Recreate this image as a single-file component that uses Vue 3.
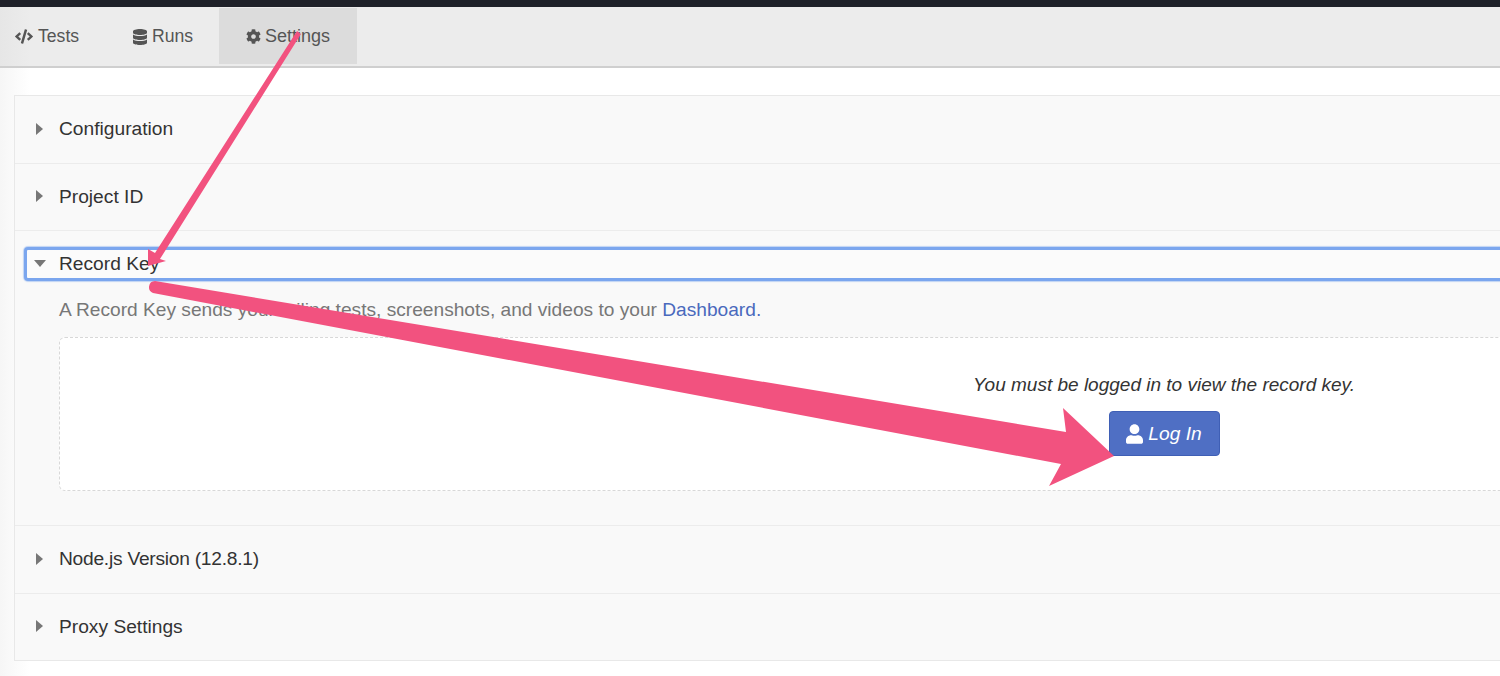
<script setup>
const user = "M224 256c70.7 0 128-57.3 128-128S294.7 0 224 0 96 57.3 96 128s57.3 128 128 128zm89.6 32h-16.7c-22.2 10.2-46.9 16-72.9 16s-50.6-5.8-72.9-16h-16.7C60.2 288 0 348.2 0 422.4V464c0 26.5 21.5 48 48 48h352c26.5 0 48-21.5 48-48v-41.6c0-74.2-60.2-134.4-134.4-134.4z";
const db = "M448 73.143v45.714C448 159.143 347.667 192 224 192S0 159.143 0 118.857V73.143C0 32.857 100.333 0 224 0s224 32.857 224 73.143zM448 176v102.857C448 319.143 347.667 352 224 352S0 319.143 0 278.857V176c48.125 33.143 136.208 48.572 224 48.572S399.874 209.143 448 176zm0 160v102.857C448 479.143 347.667 512 224 512S0 479.143 0 438.857V336c48.125 33.143 136.208 48.572 224 48.572S399.874 369.143 448 336z";
const code = "M278.9 511.5l-61-17.7c-6.4-1.8-10-8.5-8.2-14.9L346.2 8.7c1.8-6.4 8.5-10 14.9-8.2l61 17.7c6.4 1.8 10 8.5 8.2 14.9L293.8 503.3c-1.9 6.4-8.5 10.1-14.9 8.2zm-114-112.2l43.5-46.4c4.6-4.9 4.3-12.7-.8-17.2L117 256l90.6-79.7c5.1-4.5 5.5-12.3.8-17.2l-43.5-46.4c-4.5-4.8-12.1-5.1-17-.5L3.8 247.2c-5.1 4.7-5.1 12.8 0 17.5l144.1 135.1c4.9 4.6 12.5 4.4 17-.5zm327.2.6l144.1-135.1c5.1-4.7 5.1-12.8 0-17.5L492.1 112.1c-4.8-4.5-12.4-4.3-17 .5L431.6 159c-4.6 4.9-4.3 12.7.8 17.2L523 256l-90.6 79.7c-5.1 4.5-5.5 12.3-.8 17.2l43.5 46.4c4.5 4.9 12.1 5.1 17 .6z";
const cog = "M487.4 315.7l-42.6-24.6c4.3-23.2 4.3-47 0-70.2l42.6-24.6c4.9-2.8 7.1-8.6 5.5-14-11.1-35.6-30-67.8-54.7-94.6-3.8-4.1-10-5.1-14.8-2.3L380.8 110c-17.9-15.4-38.5-27.3-60.8-35.1V25.8c0-5.6-3.9-10.5-9.4-11.7-36.7-8.2-74.3-7.8-109.2 0-5.5 1.2-9.4 6.1-9.4 11.7V75c-22.2 7.9-42.8 19.8-60.8 35.1L88.7 85.5c-4.9-2.8-11-1.9-14.8 2.3-24.7 26.7-43.6 58.9-54.7 94.6-1.7 5.4.6 11.2 5.5 14L67.3 221c-4.3 23.2-4.3 47 0 70.2l-42.6 24.6c-4.9 2.8-7.1 8.6-5.5 14 11.1 35.6 30 67.8 54.7 94.6 3.8 4.1 10 5.1 14.8 2.3l42.6-24.6c17.9 15.4 38.5 27.3 60.8 35.1v49.2c0 5.6 3.9 10.5 9.4 11.7 36.7 8.2 74.3 7.8 109.2 0 5.5-1.2 9.4-6.1 9.4-11.7v-49.2c22.2-7.9 42.8-19.8 60.8-35.1l42.6 24.6c4.9 2.8 11 1.9 14.8-2.3 24.7-26.7 43.6-58.9 54.7-94.6 1.5-5.5-.7-11.3-5.6-14.1zM256 336c-44.1 0-80-35.9-80-80s35.9-80 80-80 80 35.9 80 80-35.9 80-80 80z";
</script>

<template>
  <div class="page">
    <div class="topbar"></div>
    <nav class="nav">
      <a class="tab tests">
        <svg class="ic-code" viewBox="0 0 640 512"><path :d="code" /></svg>Tests
      </a>
      <a class="tab runs">
        <svg class="ic-db" viewBox="0 0 448 512"><path :d="db" /></svg>Runs
      </a>
      <a class="tab settings">
        <svg class="ic-cog" viewBox="0 0 512 512"><path :d="cog" /></svg>Settings
      </a>
    </nav>
    <main class="content">
      <section class="panel">
        <div class="row">
          <div class="head"><i class="caret right"></i>Configuration</div>
        </div>
        <div class="row">
          <div class="head"><i class="caret right"></i>Project ID</div>
        </div>
        <div class="row open">
          <div class="head focus"><i class="caret down"></i>Record Key</div>
          <p class="desc">A Record Key sends your failing tests, screenshots, and videos to your <a class="link">Dashboard.</a></p>
          <div class="empty">
            <p class="msg">You must be logged in to view the record key.</p>
            <button class="login">
              <svg class="ic-user" viewBox="0 0 448 512"><path :d="user" /></svg>Log In
            </button>
          </div>
        </div>
        <div class="row">
          <div class="head node"><i class="caret right"></i>Node.js Version (12.8.1)</div>
        </div>
        <div class="row">
          <div class="head"><i class="caret right"></i>Proxy Settings</div>
        </div>
      </section>
    </main>
    <svg class="arrows" width="1500" height="676" viewBox="0 0 1500 676">
      <polygon points="297,31 301,34 160,259 166,261 148,266 148,249 155,253" />
      <path d="M155 281 L1066 432 L1063 408 L1114 456 L1049 486 L1061 464 L153 293 A6.2 6.2 0 0 1 155 281 Z" />
    </svg>
  </div>
</template>

<style>
html, body { margin: 0; background: #fff; }
</style>

<style scoped>
.page {
  position: relative;
  width: 1500px;
  height: 676px;
  overflow: hidden;
  background: linear-gradient(90deg, #f6f6f6 0, #fff 30px);
  font-family: "Liberation Sans", Arial, sans-serif;
  color: #333;
}
.topbar { height: 7px; background: #1f2129; }
.nav {
  display: flex;
  height: 61px;
  padding-top: 1px;
  box-sizing: border-box;
  background: linear-gradient(90deg, #e6e6e6 0, #ececec 30px);
  border-bottom: 2px solid #cfcfcf;
}
.tab {
  display: flex;
  align-items: center;
  height: 56px;
  padding-top: 1px;
  box-sizing: border-box;
  font-size: 17.6px;
  color: #555;
}
.tests { width: 117px; padding-left: 15px; }
.runs { width: 102px; padding-left: 16px; }
.settings { width: 138px; padding-left: 27px; background: #dcdcdc; font-size: 18px; }
.tab svg { fill: #555; display: block; }
.ic-code { width: 18px; height: 15px; margin-right: 5px; }
.ic-db { width: 14px; height: 16px; margin-right: 5px; }
.ic-cog { width: 15px; height: 15px; margin-right: 4px; }
.content { padding: 27px 0 0 14px; }
.panel {
  width: 2300px;
  box-sizing: border-box;
  background: #f9f9f9;
  border: 1px solid #e8e8e8;
}
.row { border-bottom: 1px solid #ececec; }
.row:last-child { border-bottom: 0; }
.head {
  display: flex;
  align-items: center;
  height: 66.6px;
  padding-left: 21px;
  box-sizing: border-box;
  font-size: 19.2px;
  color: #333;
}
.head.node { letter-spacing: -0.25px; }
.caret { display: block; width: 0; height: 0; margin-bottom: 1px; }
.caret.right {
  border-left: 7px solid #777;
  border-top: 6px solid transparent;
  border-bottom: 6px solid transparent;
  margin-right: 16px;
}
.caret.down {
  border-top: 7px solid #777;
  border-left: 6px solid transparent;
  border-right: 6px solid transparent;
  margin-left: -1px;
  margin-right: 13px;
}
.open { height: 277.8px; }
.head.focus {
  height: 34px;
  margin: 16px 0 0 9px;
  padding-left: 8px;
  border: 3px solid #7ba6ee;
  border-radius: 4px;
  background: #fbfbfb;
  box-shadow: 0 0 1px 1px rgba(123, 166, 238, 0.45);
}
.desc {
  margin: 16px 0 0 44px;
  font-size: 19.15px;
  line-height: 26px;
  color: #777;
}
.link { color: #4a69bd; }
.empty {
  margin: 14px 0 0 44px;
  width: 2210px;
  height: 154px;
  box-sizing: border-box;
  padding-top: 34px;
  background: #fff;
  border: 1px dashed #d8d8d8;
  border-radius: 6px;
  text-align: center;
}
.msg {
  margin: 0;
  font-size: 19px;
  line-height: 26px;
  font-style: italic;
  color: #333;
}
.login {
  display: inline-flex;
  align-items: center;
  justify-content: center;
  width: 111px;
  height: 45px;
  margin-top: 13px;
  padding: 0;
  background: #4f6fc4;
  border: 1px solid #3f5fb5;
  border-radius: 4px;
  color: #fff;
  font: italic 19.2px "Liberation Sans", Arial, sans-serif;
}
.ic-user { width: 17px; height: 20px; margin-right: 5px; fill: #fff; }
.arrows { position: absolute; left: 0; top: 0; pointer-events: none; }
.arrows polygon, .arrows path { fill: #f2527f; }
</style>
